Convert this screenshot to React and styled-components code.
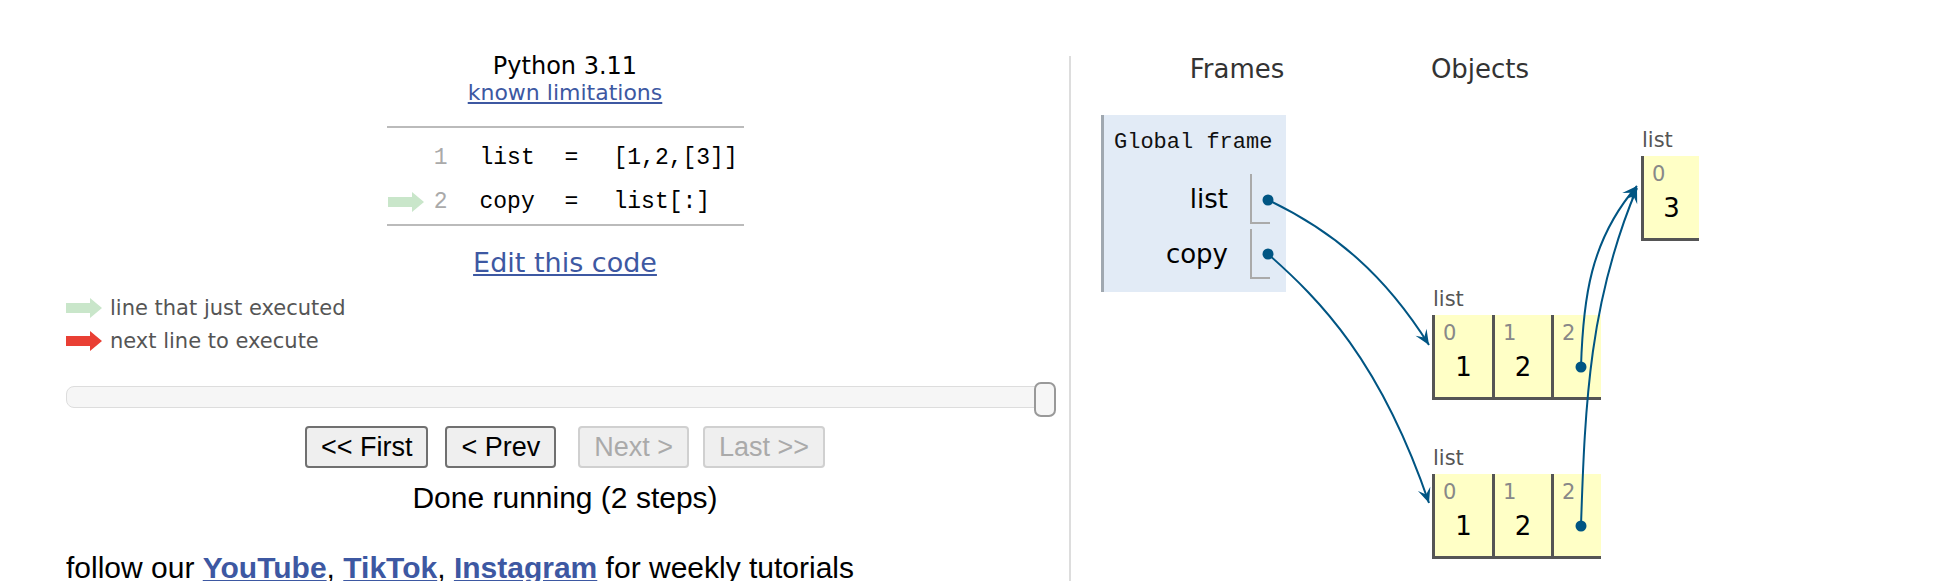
import React from "react";
import styled, { createGlobalStyle } from "styled-components";

const GlobalStyle = createGlobalStyle`
  html, body {
    margin: 0;
    padding: 0;
    background: #fff;
  }
  body {
    font-family: "DejaVu Sans", Verdana, sans-serif;
    overflow: hidden;
  }
`;

const LINK = "#3d58a2";
const POINTER = "#005583";
const MONO = `"Liberation Mono", "DejaVu Sans Mono", monospace`;
const ARIAL = `"Liberation Sans", Arial, sans-serif`;

/* ================= PAGE ================= */

const Page = styled.div`
  position: relative;
  display: flex;
  width: 1946px;
  height: 581px;
  overflow: hidden;
`;

const LeftCol = styled.div`
  box-sizing: border-box;
  width: 1064px;
  flex-shrink: 0;
  padding-left: 66px;
  display: flex;
  flex-direction: column;
  align-items: center;

  & > * {
    flex-shrink: 0;
  }
`;

const Divider = styled.div`
  width: 2px;
  flex-shrink: 0;
  margin: 56px 0 0 5px;
  background: #dddddd;
`;

const RightCol = styled.div`
  position: relative;
  flex: 1;
  padding-top: 54px;
`;

/* ================= CODE PANE ================= */

const Title = styled.div`
  margin-top: 52px;
  font-size: 24px;
  line-height: 28px;
  color: #000;
`;

const SmallLink = styled.a`
  margin-top: 1px;
  font-size: 22px;
  line-height: 24px;
  color: ${LINK};
  text-decoration: underline;
`;

const CodeTable = styled.div`
  width: 357px;
  margin-top: 21px;
  padding-top: 8px;
  border-top: 2px solid #bbbbbb;
  border-bottom: 2px solid #bbbbbb;
`;

const CodeRow = styled.div`
  display: flex;
  align-items: center;
  height: 44px;
`;

const ArrowCell = styled.div`
  width: 46px;
  padding-left: 1px;
  display: flex;
  align-items: center;
`;

const LineNo = styled.span`
  width: 14px;
  text-align: right;
  font-family: ${MONO};
  font-size: 23px;
  color: #aaaaaa;
`;

const CodeText = styled.span`
  margin-left: 32px;
  font-family: ${MONO};
  font-size: 23px;
  color: #000;
  white-space: pre;
`;

const Tok = styled.span`
  display: inline-block;
  width: ${(p) => (p.$w ? `${p.$w}px` : "auto")};
`;

const EditLink = styled.a`
  margin-top: 21px;
  font-size: 27px;
  line-height: 32px;
  color: ${LINK};
  text-decoration: underline;
`;

const Legend = styled.div`
  align-self: flex-start;
  margin-top: 12px;
`;

const LegendRow = styled.div`
  display: flex;
  align-items: center;
  gap: 8px;
  height: 33px;
  font-size: 21px;
  color: #555;
`;

const Slider = styled.div`
  align-self: flex-start;
  position: relative;
  box-sizing: border-box;
  width: 990px;
  height: 22px;
  margin-top: 29px;
  border: 1px solid #dddddd;
  border-radius: 8px;
  background: #f6f6f6;
`;

const Thumb = styled.span`
  position: absolute;
  right: -1px;
  top: -5px;
  box-sizing: border-box;
  width: 22px;
  height: 35px;
  border: 2px solid #999999;
  border-radius: 7px;
  background: #f6f6f6;
`;

const ButtonBar = styled.div`
  display: flex;
  gap: 22px;
  margin-top: 18px;
`;

const ButtonGroup = styled.div`
  display: flex;
  gap: ${(p) => p.$gap}px;
`;

const NavButton = styled.button`
  height: 42px;
  padding: 0 14px;
  font-family: ${ARIAL};
  font-size: 27px;
  color: ${(p) => (p.disabled ? "#aaaaaa" : "#000")};
  background: #efefef;
  border: 2px solid ${(p) => (p.disabled ? "#d0d0d0" : "#707070")};
  border-radius: 4px;
`;

const Status = styled.div`
  margin-top: 12px;
  font-family: ${ARIAL};
  font-size: 30px;
  line-height: 36px;
  color: #000;
`;

const Follow = styled.div`
  align-self: flex-start;
  margin-top: 34px;
  font-family: ${ARIAL};
  font-size: 30px;
  line-height: 36px;
  color: #000;
  white-space: nowrap;

  a {
    color: ${LINK};
    font-weight: bold;
    text-decoration: underline;
  }
`;

/* ================= VISUALIZER ================= */

const Header = styled.div`
  display: flex;
  padding-left: 30px;
`;

const HeaderCell = styled.div`
  width: ${(p) => p.$w}px;
  text-align: center;
  font-size: 26px;
  line-height: 30px;
  color: #333;
`;

const FrameBox = styled.div`
  box-sizing: border-box;
  width: 185px;
  margin: 31px 0 0 30px;
  padding: 14px 16px 13px 10px;
  border-left: 3px solid #a0a8b0;
  background: #e2ebf6;
`;

const FrameTitle = styled.div`
  font-family: ${MONO};
  font-size: 22px;
  line-height: 28px;
  color: #111;
  white-space: nowrap;
`;

const FrameVars = styled.div`
  display: flex;
  flex-direction: column;
  gap: 5px;
  margin-top: 17px;
`;

const VarRow = styled.div`
  display: flex;
  justify-content: flex-end;
  align-items: center;
  height: 50px;
`;

const VarName = styled.span`
  margin-right: 22px;
  font-size: 26px;
  line-height: 30px;
  color: #000;
`;

const VarCell = styled.span`
  box-sizing: border-box;
  width: 20px;
  height: 50px;
  border-left: 2px solid #aaaaaa;
  border-bottom: 2px solid #aaaaaa;
`;

const HeapObj = styled.div`
  position: absolute;
  left: ${(p) => p.$x}px;
  top: ${(p) => p.$y}px;
`;

const HeapLabel = styled.div`
  margin-bottom: 4px;
  padding-left: 1px;
  font-size: 21px;
  line-height: 24px;
  color: #555;
`;

const HeapRow = styled.div`
  display: flex;
`;

const HeapCell = styled.div`
  box-sizing: border-box;
  width: ${(p) => p.$w}px;
  height: 85px;
  padding-top: 6px;
  border-left: 3px solid #555;
  border-bottom: 3px solid #555;
  background: #ffffc6;
`;

const CellIndex = styled.div`
  padding-left: 8px;
  font-size: 21px;
  line-height: 24px;
  color: #888;
`;

const CellValue = styled.div`
  margin-top: 7px;
  text-align: center;
  font-size: 26px;
  line-height: 30px;
  color: #000;
`;

const Overlay = styled.svg`
  position: absolute;
  left: 0;
  top: 0;
  pointer-events: none;
`;

/* ================= DRAWINGS ================= */

const LineArrow = ({ color }) => (
  <svg width="36" height="20" viewBox="0 0 36 20">
    <polygon points="0,5 24,5 24,0 36,10 24,20 24,15 0,15" fill={color} />
  </svg>
);

const arrowHead = (tip, from, L = 15, W = 13) => {
  const dx = tip[0] - from[0];
  const dy = tip[1] - from[1];
  const len = Math.hypot(dx, dy);
  const ux = dx / len;
  const uy = dy / len;
  const px = -uy;
  const py = ux;
  const bx = tip[0] - ux * L;
  const by = tip[1] - uy * L;
  const nx = tip[0] - ux * L * 0.6;
  const ny = tip[1] - uy * L * 0.6;
  return [
    [tip[0], tip[1]],
    [bx + (px * W) / 2, by + (py * W) / 2],
    [nx, ny],
    [bx - (px * W) / 2, by - (py * W) / 2],
  ]
    .map((pt) => pt.join(","))
    .join(" ");
};

// start, control 1, control 2, tip (page coordinates)
const pointers = [
  { s: [1268, 200], c1: [1335, 232], c2: [1385, 275], t: [1429, 345] },
  { s: [1268, 254], c1: [1320, 300], c2: [1380, 360], t: [1429, 503] },
  { s: [1581, 367], c1: [1583, 300], c2: [1590, 240], t: [1637, 186] },
  { s: [1581, 526], c1: [1585, 400], c2: [1590, 300], t: [1637, 188] },
];

const Pointers = () => (
  <Overlay width="1946" height="581" viewBox="0 0 1946 581">
    {pointers.map((p, i) => (
      <g key={i}>
        <path
          d={`M${p.s} C${p.c1} ${p.c2} ${p.t}`}
          fill="none"
          stroke={POINTER}
          strokeWidth="2"
        />
        <polygon points={arrowHead(p.t, p.c2)} fill={POINTER} />
        <circle cx={p.s[0]} cy={p.s[1]} r="5.5" fill={POINTER} />
      </g>
    ))}
  </Overlay>
);

/* ================= DATA ================= */

const code = [
  { n: 1, toks: ["list", "=", "[1,2,[3]]"], arrow: false },
  { n: 2, toks: ["copy", "=", "list[:]"], arrow: true },
];

const heap = [
  { x: 570, y: 128, cells: [{ i: 0, v: "3", w: 58 }] },
  {
    x: 361,
    y: 287,
    cells: [
      { i: 0, v: "1", w: 60 },
      { i: 1, v: "2", w: 59 },
      { i: 2, v: "", w: 50 },
    ],
  },
  {
    x: 361,
    y: 446,
    cells: [
      { i: 0, v: "1", w: 60 },
      { i: 1, v: "2", w: 59 },
      { i: 2, v: "", w: 50 },
    ],
  },
];

/* ================= COMPONENT ================= */

const App = () => {
  return (
    <>
      <GlobalStyle />
      <Page>
        <LeftCol>
          <Title>Python 3.11</Title>
          <SmallLink href="#">known limitations</SmallLink>

          <CodeTable>
            {code.map((line) => (
              <CodeRow key={line.n}>
                <ArrowCell>{line.arrow && <LineArrow color="#c9e6ca" />}</ArrowCell>
                <LineNo>{line.n}</LineNo>
                <CodeText>
                  <Tok $w={85}>{line.toks[0]}</Tok>
                  <Tok $w={49}>{line.toks[1]}</Tok>
                  <Tok>{line.toks[2]}</Tok>
                </CodeText>
              </CodeRow>
            ))}
          </CodeTable>

          <EditLink href="#">Edit this code</EditLink>

          <Legend>
            <LegendRow>
              <LineArrow color="#c9e6ca" />
              line that just executed
            </LegendRow>
            <LegendRow>
              <LineArrow color="#e93f34" />
              next line to execute
            </LegendRow>
          </Legend>

          <Slider>
            <Thumb />
          </Slider>

          <ButtonBar>
            <ButtonGroup $gap={17}>
              <NavButton>&lt;&lt; First</NavButton>
              <NavButton>&lt; Prev</NavButton>
            </ButtonGroup>
            <ButtonGroup $gap={14}>
              <NavButton disabled>Next &gt;</NavButton>
              <NavButton disabled>Last &gt;&gt;</NavButton>
            </ButtonGroup>
          </ButtonBar>

          <Status>Done running (2 steps)</Status>

          <Follow>
            follow our <a href="#">YouTube</a>, <a href="#">TikTok</a>,{" "}
            <a href="#">Instagram</a> for weekly tutorials
          </Follow>
        </LeftCol>

        <Divider />

        <RightCol>
          <Header>
            <HeaderCell $w={272}>Frames</HeaderCell>
            <HeaderCell $w={214}>Objects</HeaderCell>
          </Header>

          <FrameBox>
            <FrameTitle>Global frame</FrameTitle>
            <FrameVars>
              <VarRow>
                <VarName>list</VarName>
                <VarCell />
              </VarRow>
              <VarRow>
                <VarName>copy</VarName>
                <VarCell />
              </VarRow>
            </FrameVars>
          </FrameBox>

          {heap.map((obj, k) => (
            <HeapObj key={k} $x={obj.x} $y={obj.y}>
              <HeapLabel>list</HeapLabel>
              <HeapRow>
                {obj.cells.map((c) => (
                  <HeapCell key={c.i} $w={c.w}>
                    <CellIndex>{c.i}</CellIndex>
                    <CellValue>{c.v || "\u00a0"}</CellValue>
                  </HeapCell>
                ))}
              </HeapRow>
            </HeapObj>
          ))}
        </RightCol>

        <Pointers />
      </Page>
    </>
  );
};

export default App;
